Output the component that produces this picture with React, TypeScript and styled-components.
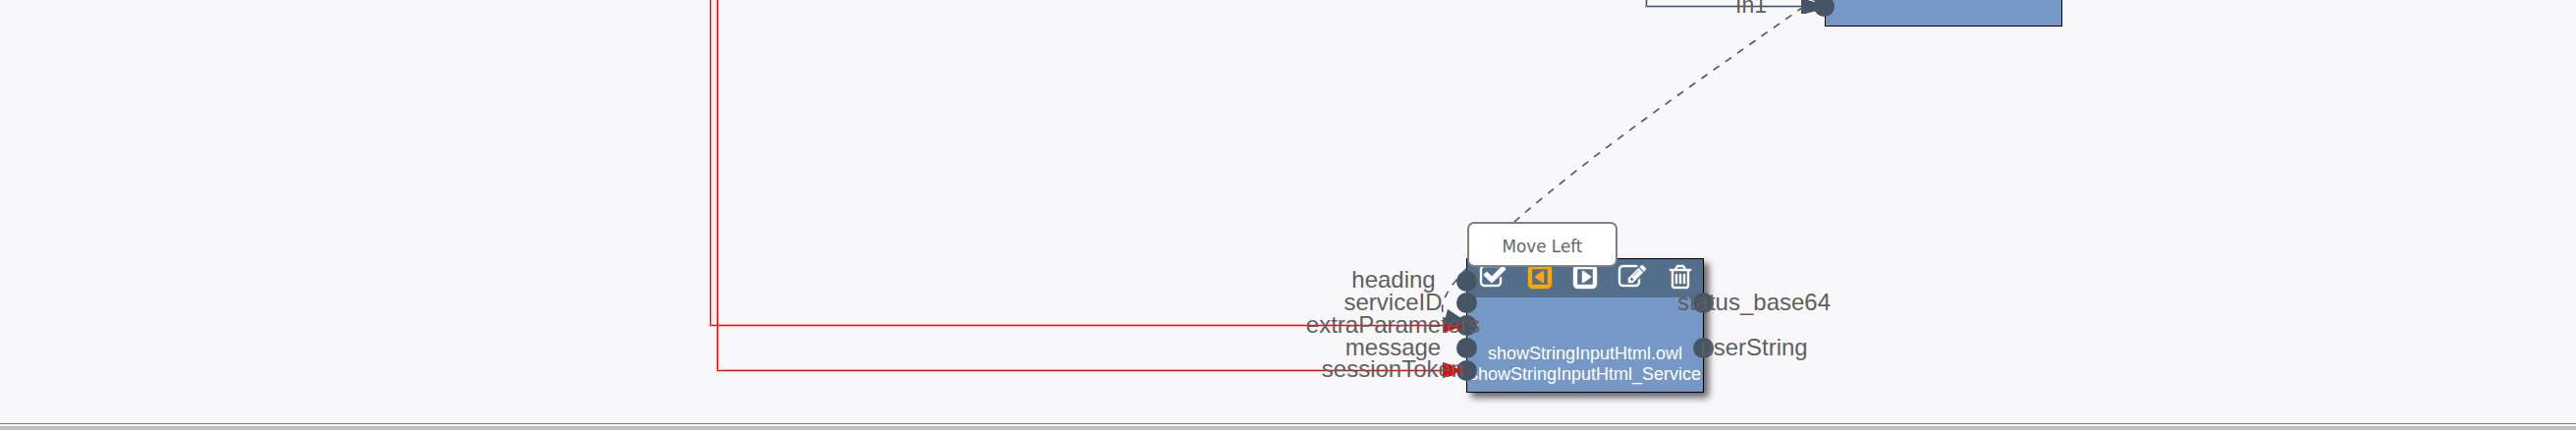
import React from "react";
import styled, { createGlobalStyle } from "styled-components";

const Global = createGlobalStyle`
  html, body { margin: 0; padding: 0; background: #f8f9fb; overflow: hidden; }
`;

const Page = styled.div`
  display: flex;
  flex-direction: column;
  height: 438px;
  font-family: "Liberation Sans", Arial, sans-serif;
  color: #666;
`;

const Canvas = styled.main`
  position: relative;
  flex: 1;
  overflow: hidden;
  background: #f8f8fb;
  border-bottom: 1px solid #808080;
`;

const Gap = styled.div`
  height: 2px;
  background: #f3f3f6;
`;

const Footer = styled.footer`
  height: 4px;
  background: #c0c0c0;
`;

const Wires = styled.svg`
  position: absolute;
  inset: 0;
  width: 100%;
  height: 100%;
`;

const Node = styled.section<{ $x: number; $y: number; $raised?: boolean }>`
  position: absolute;
  left: ${(p) => p.$x}px;
  top: ${(p) => p.$y}px;
  box-sizing: border-box;
  width: 242px;
  height: 137px;
  display: flex;
  flex-direction: column;
  justify-content: space-between;
  border: 1px solid #000;
  background: #7698c6;
  box-shadow: ${(p) => (p.$raised ? "5px 5px 7px rgba(0,0,0,.6)" : "none")};
`;

const Toolbar = styled.div`
  display: flex;
  gap: 18px;
  height: 39px;
  padding-left: 12px;
  background: #536f8c;
`;

const ToolIcon = styled.svg<{ $active?: boolean; $width: number }>`
  flex: none;
  width: ${(p) => p.$width}px;
  height: 28px;
  margin-top: 4px;
  overflow: visible;
  fill: ${(p) => (p.$active ? "#ffa500" : "#fff")};
  stroke: ${(p) => (p.$active ? "#ffa500" : "#fff")};
  stroke-width: 26px;
`;

const Caption = styled.div`
  display: flex;
  flex-direction: column;
  align-items: center;
  margin-bottom: 7px;
  color: #fff;
  font-size: 18px;
  line-height: 21px;
  white-space: nowrap;
`;

const Port = styled.i<{ $x: number; $y: number }>`
  position: absolute;
  left: ${(p) => p.$x}px;
  top: ${(p) => p.$y}px;
  width: 21px;
  height: 21px;
  border-radius: 50%;
  background: #455565;
`;

const PortLabel = styled.span<{ $x: number; $y: number; $size?: number }>`
  position: absolute;
  left: ${(p) => p.$x}px;
  top: ${(p) => p.$y}px;
  transform: translateX(-50%);
  font-size: ${(p) => p.$size ?? 24}px;
  line-height: 26px;
  color: #5f5f5f;
  white-space: nowrap;
`;

const Tooltip = styled.div`
  position: absolute;
  left: 1494px;
  top: 226px;
  box-sizing: border-box;
  width: 153px;
  height: 46px;
  display: flex;
  align-items: center;
  justify-content: center;
  padding-top: 4px;
  border: 2px solid #808080;
  border-radius: 7px;
  background: #fff;
  font: 16.8px/20px "DejaVu Sans", Verdana, sans-serif;
  color: #666;
`;

const icons = [
  { name: "check", width: 30, d: "M1472 930v318q0 119-84.5 203.5t-203.5 84.5h-832q-119 0-203.5-84.5t-84.5-203.5v-832q0-119 84.5-203.5t203.5-84.5h832q63 0 117 25 15 7 18 23 3 17-9 29l-49 49q-10 10-23 10-3 0-9-2-23-6-45-6h-832q-66 0-113 47t-47 113v832q0 66 47 113t113 47h832q66 0 113-47t47-113v-254q0-13 9-22l64-64q10-10 23-10 6 0 12 3 20 8 20 29zm231-489l-814 814q-24 24-57 24t-57-24l-430-430q-24-24-24-57t24-57l110-110q24-24 57-24t57 24l263 263 647-647q24-24 57-24t57 24l110 110q24 24 24 57t-24 57z" },
  { name: "left", width: 28, d: "M1152 576v640q0 26-19 45t-45 19q-20 0-37-12l-448-320q-27-19-27-52t27-52l448-320q17-12 37-12 26 0 45 19t19 45zm256 800v-960q0-13-9.500-22.500t-22.500-9.500h-960q-13 0-22.500 9.500t-9.500 22.500v960q0 13 9.500 22.500t22.500 9.500h960q13 0 22.500-9.500t9.500-22.500zm256-960v960q0 119-84.500 203.500t-203.500 84.500h-960q-119 0-203.500-84.500t-84.500-203.500v-960q0-119 84.500-203.500t203.500-84.500h960q119 0 203.500 84.500t84.500 203.500z" },
  { name: "right", width: 30, d: "M1280 896q0 33-27 52l-448 320q-17 12-37 12-26 0-45-19t-19-45v-640q0-26 19-45t45-19q20 0 37 12l448 320q27 19 27 52zm128 480v-960q0-13-9.500-22.500t-22.500-9.500h-960q-13 0-22.500 9.500t-9.500 22.500v960q0 13 9.500 22.500t22.500 9.500h960q13 0 22.500-9.500t9.500-22.500zm256-960v960q0 119-84.500 203.500t-203.500 84.500h-960q-119 0-203.500-84.500t-84.500-203.500v-960q0-119 84.500-203.500t203.500-84.500h960q119 0 203.500 84.500t84.500 203.500z" },
  { name: "edit", width: 31, d: "M888 1184l116-116-152-152-116 116v56h96v96h56zm440-720q-16-16-33 1l-350 350q-17 17-1 33t33-1l350-350q17-17 1-33zm80 594v190q0 119-84.500 203.500t-203.500 84.500h-832q-119 0-203.500-84.500t-84.500-203.500v-832q0-119 84.500-203.500t203.500-84.500h832q63 0 117 25 15 7 18 23 3 17-9 29l-49 49q-14 14-32 8-23-6-45-6h-832q-66 0-113 47t-47 113v832q0 66 47 113t113 47h832q66 0 113-47t47-113v-126q0-13 9-22l64-64q15-15 35-7t20 29zm-96-738l288 288-672 672h-288v-288zm444 132l-92 92-288-288 92-92q28-28 68-28t68 28l152 152q28 28 28 68t-28 68z" },
  { name: "delete", width: 28, d: "M704 736v576q0 14-9 23t-23 9h-64q-14 0-23-9t-9-23v-576q0-14 9-23t23-9h64q14 0 23 9t9 23zm256 0v576q0 14-9 23t-23 9h-64q-14 0-23-9t-9-23v-576q0-14 9-23t23-9h64q14 0 23 9t9 23zm256 0v576q0 14-9 23t-23 9h-64q-14 0-23-9t-9-23v-576q0-14 9-23t23-9h64q14 0 23 9t9 23zm128 724v-948h-896v948q0 22 7 40.500t14.500 27 10.500 8.500h832q3 0 10.500-8.500t14.500-27 7-40.500zm-672-1076h448l-48-117q-7-9-17-11h-317q-10 2-17 11zm928 32v64q0 14-9 23t-23 9h-96v948q0 83-47 143.500t-113 60.500h-832q-66 0-113-58.500t-47-141.500v-952h-96q-14 0-23-9t-9-23v-64q0-14 9-23t23-9h309l70-167q15-37 54-63t79-26h320q40 0 79 26t54 63l70 167h309q14 0 23 9t9 23z" },
];

const inputs = [
  { name: "heading", x: 1419, y: 272, port: 276 },
  { name: "serviceID", x: 1418.5, y: 295, port: 298 },
  { name: "extraParameters", x: 1418.5, y: 318, port: 321 },
  { name: "message", x: 1418.5, y: 341, port: 344 },
  { name: "sessionToken", x: 1418.5, y: 363, port: 367 },
];
const outputs = [
  { name: "status_base64", x: 1786, y: 295, port: 298 },
  { name: "userString", x: 1786, y: 341, port: 344 },
];

export default function App() {
  return (
    <Page>
      <Global />
      <Canvas>
        <Node $x={1858} $y={-110} />
        <Node $x={1493} $y={263} $raised>
          <Toolbar>
            {icons.map((icon) => (
              <ToolIcon
                key={icon.name}
                viewBox="0 0 1792 1792"
                preserveAspectRatio="xMinYMid meet"
                $width={icon.width}
                $active={icon.name === "left"}
              >
                <path d={icon.d} />
              </ToolIcon>
            ))}
          </Toolbar>
          <Caption>
            <span>showStringInputHtml.owl</span>
            <span>showStringInputHtml_Service</span>
          </Caption>
        </Node>
        {inputs.map((p) => <Port key={p.name} $x={1483} $y={p.port} />)}
        {outputs.map((p) => <Port key={p.name} $x={1724} $y={p.port} />)}
        <Port $x={1847} $y={-4} />
        <Wires>
          <g fill="none">
            <path d="M723.5 0V331.5H1478M730.5 0V377.5H1478" stroke="#f00" strokeOpacity=".25" strokeWidth="3" />
            <path d="M723.5 0V331.5H1478M730.5 0V377.5H1478" stroke="#f00" />
            <path d="M1676.5 0V6.5H1845" stroke="#455565" strokeOpacity=".3" strokeWidth="3" />
            <path d="M1676.5 0V6.5H1845" stroke="#455565" />
            <path
              d="M1834 8.500C1740 75 1625 153 1542 226C1520 245 1500 267 1493 274C1480 287 1466 305 1469 318"
              stroke="#455565"
              strokeWidth="1.6"
              strokeDasharray="7.5 7.5"
              strokeDashoffset="3"
            />
          </g>
          <path d="M1469 323L1493 331.5L1469 339Z" fill="#f00" />
          <path d="M1469 369L1482 373V375L1493 377.5L1482 380V382L1469 385Z" fill="#f00" />
          <path d="M1474 315L1494 328V331L1470 331Z" fill="#455565" />
          <path d="M1834 0H1850V11L1838 14H1834Z" fill="#455565" />
          <path d="M1842 0L1848 1.500" stroke="#f8f8fb" strokeWidth="1.2" />
        </Wires>
        {[...inputs, ...outputs].map((p) => (
          <PortLabel key={p.name} $x={p.x} $y={p.y}>{p.name}</PortLabel>
        ))}
        <PortLabel $x={1783} $y={-8} $size={23}>In1</PortLabel>
        <Tooltip>Move Left</Tooltip>
      </Canvas>
      <Gap />
      <Footer />
    </Page>
  );
}
